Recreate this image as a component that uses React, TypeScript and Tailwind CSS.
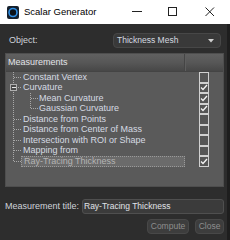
import React from "react";

type Row = { label: string; level: number; checked?: boolean; selected?: boolean };

const rows: Row[] = [
  { label: "Constant Vertex", level: 0 },
  { label: "Curvature", level: 0, checked: true },
  { label: "Mean Curvature", level: 1, checked: true },
  { label: "Gaussian Curvature", level: 1, checked: true },
  { label: "Distance from Points", level: 0 },
  { label: "Distance from Center of Mass", level: 0 },
  { label: "Intersection with ROI or Shape", level: 0 },
  { label: "Mapping from", level: 0 },
  { label: "Ray-Tracing Thickness", level: 0, checked: true, selected: true },
];

const RH = 10.5;

function TreeLines() {
  const topCenters = [0, 1, 4, 5, 6, 7, 8].map((i) => i * RH + 5.25);
  const last = 8 * RH + 5.25;
  return (
    <svg
      className="absolute left-0 top-0 pointer-events-none"
      width={179}
      height={96}
      shapeRendering="crispEdges"
    >
      <line x1={7.5} y1={0} x2={7.5} y2={Math.round(last)} stroke="#a8a8a8" strokeDasharray="1 1" />
      {topCenters.map((c, i) => (
        <line key={i} x1={8} y1={Math.floor(c) + 0.5} x2={16} y2={Math.floor(c) + 0.5} stroke="#a8a8a8" strokeDasharray="1 1" />
      ))}
      <line x1={24.5} y1={21} x2={24.5} y2={37} stroke="#a8a8a8" strokeDasharray="1 1" />
      <line x1={25} y1={26.5} x2={33} y2={26.5} stroke="#a8a8a8" strokeDasharray="1 1" />
      <line x1={25} y1={36.5} x2={33} y2={36.5} stroke="#a8a8a8" strokeDasharray="1 1" />
      <rect x={4.5} y={12.5} width={6} height={6} fill="#4a4a4a" stroke="#b0b0b0" />
      <line x1={6} y1={15.5} x2={10} y2={15.5} stroke="#e8e8e8" />
    </svg>
  );
}

function Check({ on }: { on?: boolean }) {
  return (
    <div className="w-[10px] h-[10.5px] border border-[#d0d0d0] bg-[#555555] flex items-center justify-center">
      {on && (
        <svg width="8" height="7" viewBox="0 0 8 7">
          <path d="M1 3.5 L3 5.5 L7 1" stroke="#f4f4f4" strokeWidth="1.3" fill="none" />
        </svg>
      )}
    </div>
  );
}

export default function App() {
  return (
    <div
      className="w-[230px] h-[240px] flex flex-col overflow-hidden"
      style={{ fontFamily: '"Liberation Sans", Arial, sans-serif' }}
    >
      {/* Title bar */}
      <div className="h-[24px] bg-white flex items-center shrink-0">
        <div className="ml-[7px] w-[12px] h-[13px]">
          <svg width="12" height="13" viewBox="0 0 12 13">
            <rect x="0" y="0" width="12" height="13" rx="2" fill="#16202c" />
            <circle cx="6" cy="6.5" r="4" stroke="#2f8fe6" strokeWidth="1.6" fill="#0b1118" />
          </svg>
        </div>
        <span className="ml-[5px] text-[9.5px] text-black leading-none">Scalar Generator</span>
        <div className="ml-auto flex items-center">
          <svg width="10" height="10" className="mr-[26px]" shapeRendering="crispEdges">
            <line x1="0" y1="4.5" x2="10" y2="4.5" stroke="#222" />
          </svg>
          <svg width="10" height="10" className="mr-[27px]" shapeRendering="crispEdges">
            <rect x="0.5" y="0.5" width="8" height="8" stroke="#222" fill="none" />
          </svg>
          <svg width="10" height="10" className="mr-[15px]">
            <path d="M0.5 0.5 L9 9 M9 0.5 L0.5 9" stroke="#222" strokeWidth="1" />
          </svg>
        </div>
      </div>

      {/* Body */}
      <div className="flex-1 flex bg-[#2d2d2d]">
        <div className="flex-1 flex flex-col pl-[5px] pr-[3px] pt-[9px]">
          {/* Object row */}
          <div className="flex items-center h-[15px]">
            <span className="ml-[4px] text-[9px] text-[#cfd3da]">Object:</span>
            <div className="ml-auto mr-[3px] w-[108px] h-[15px] rounded-[4px] bg-[#393939] border border-[#474747] flex items-center pl-[3px] pr-[6px]">
              <span className="text-[8.5px] text-[#d6dae0]">Thickness Mesh</span>
              <svg width="6" height="4" className="ml-auto">
                <path d="M0 0 L6 0 L3 3.5 Z" fill="#d0d0d0" />
              </svg>
            </div>
          </div>

          {/* Tree panel */}
          <div className="mt-[5px] h-[134px] bg-[#5a5a5a] border border-[#4e4e4e] flex flex-col">
            <div className="h-[18px] flex bg-linear-to-b from-[#606060] via-[#575757] to-[#474747] border-b border-[#444444]">
              <div className="w-[179px] border-r border-[#454545] flex items-center pl-[2px]">
                <span className="text-[9px] text-[#e2e4e8]">Measurements</span>
              </div>
              <div className="flex-1 border-l border-[#5e5e5e]" />
            </div>
            <div className="flex">
              <div className="w-[179px] relative">
                <TreeLines />
                {rows.map((r) => (
                  <div key={r.label} className="h-[10.5px] flex items-center">
                    <div
                      className={
                        "h-full flex items-center whitespace-nowrap " +
                        (r.level === 0 ? "ml-[15px] pl-[2px] " : "ml-[32px] pl-[1px] ") +
                        (r.selected
                          ? "flex-1 bg-[#6b6b6b] border border-dotted border-[#9a9a9a] text-[#b4b4b4]"
                          : "text-[#d6dbe3]")
                      }
                    >
                      <span className="text-[9px] leading-none">{r.label}</span>
                    </div>
                  </div>
                ))}
              </div>
              <div className="flex-1 flex flex-col items-center pr-[1px]">
                {rows.map((r) => (
                  <Check key={r.label} on={r.checked} />
                ))}
              </div>
            </div>
          </div>

          {/* Title row */}
          <div className="mt-[12px] flex items-center h-[15px]">
            <span className="text-[9px] text-[#cfd3da] whitespace-nowrap">Measurement title:</span>
            <div className="ml-auto w-[142px] h-[15px] rounded-[3px] bg-[#3b3b3b] border border-[#4f4f4f] flex items-center pl-[1px]">
              <span className="text-[8.5px] text-[#e0e3e8] whitespace-nowrap">Ray-Tracing Thickness</span>
            </div>
          </div>

          {/* Buttons */}
          <div className="mt-[5px] flex justify-end gap-[6px] h-[15px]">
            <div className="w-[42px] h-[15px] rounded-[4px] bg-[#3d3d3d] border border-[#484848] flex items-center justify-center">
              <span className="text-[8.5px] text-[#8e8e8e]">Compute</span>
            </div>
            <div className="w-[29px] h-[15px] rounded-[4px] bg-[#3d3d3d] border border-[#484848] flex items-center justify-center">
              <span className="text-[8.5px] text-[#8e8e8e]">Close</span>
            </div>
          </div>
        </div>
        <div className="w-[3px] bg-[#1e1e1e]" />
      </div>
    </div>
  );
}
